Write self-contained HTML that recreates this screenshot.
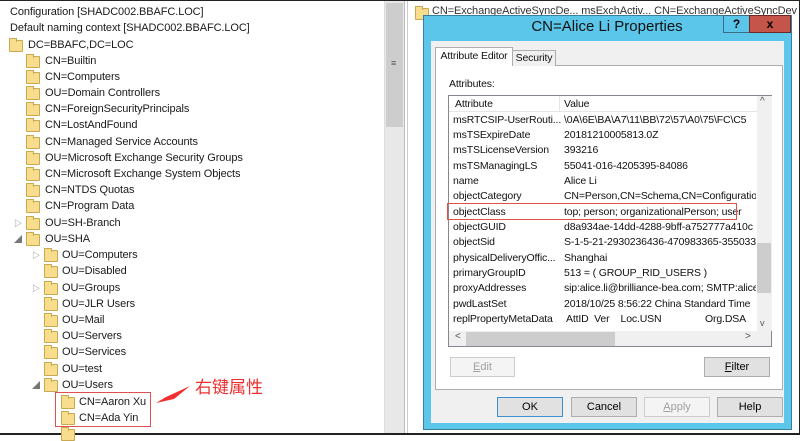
<!DOCTYPE html>
<html><head><meta charset="utf-8"><style>
*{margin:0;padding:0;box-sizing:border-box}
body{width:800px;height:435px;overflow:hidden;background:#fff;position:relative;font-family:"Liberation Sans","Noto Sans CJK SC",sans-serif;color:#000}
.a{position:absolute;white-space:nowrap}
.t{font-size:11px;line-height:16px;color:#1a1a1a;letter-spacing:-0.1px}
.f{position:absolute;width:14px;height:12px;background:#f8dd8f;border:1px solid #c9a94d;border-radius:1px}
.f:before{content:"";position:absolute;left:-1px;top:-3px;width:6px;height:3px;background:#f8dd8f;border:1px solid #c9a94d;border-bottom:none}
.ex{position:absolute;font-size:8px;color:#777}
.d{font-size:10.5px;line-height:16px;color:#111;letter-spacing:-0.15px}
.btn{position:absolute;height:20px;background:#e1e1e1;border:1px solid #adadad;font-size:11px;text-align:center;line-height:18px}
</style></head><body>
<div class="a" style="left:0;top:0;width:800px;height:1px;background:#222"></div>
<div class="a" style="left:0;top:433px;width:800px;height:2px;background:#222"></div>
<div class="a" style="left:799px;top:0;width:1px;height:435px;background:#222"></div>
<div class="a" style="left:384px;top:1px;width:20px;height:432px;background:#e8e8e8;border-left:1px solid #ddd"></div>
<div class="a" style="left:386px;top:3px;width:17px;height:124px;background:#cdcdcd"></div>
<div class="a" style="left:391px;top:58px;font-size:9px;color:#555">≡</div>
<div class="a" style="left:404px;top:1px;width:4px;height:432px;background:#fff;border-left:1px solid #bbb;border-right:1px solid #ccc"></div>
<div class="a t" style="left:10px;top:4px">Configuration [SHADC002.BBAFC.LOC]</div>
<div class="a t" style="left:10px;top:20px">Default naming context [SHADC002.BBAFC.LOC]</div>
<div class="f" style="left:9px;top:40px"></div><div class="a t" style="left:28px;top:37px">DC=BBAFC,DC=LOC</div>
<div class="f" style="left:26px;top:56px"></div><div class="a t" style="left:45px;top:53px">CN=Builtin</div>
<div class="f" style="left:26px;top:72px"></div><div class="a t" style="left:45px;top:69px">CN=Computers</div>
<div class="f" style="left:26px;top:88px"></div><div class="a t" style="left:45px;top:85px">OU=Domain Controllers</div>
<div class="f" style="left:26px;top:104px"></div><div class="a t" style="left:45px;top:101px">CN=ForeignSecurityPrincipals</div>
<div class="f" style="left:26px;top:120px"></div><div class="a t" style="left:45px;top:117px">CN=LostAndFound</div>
<div class="f" style="left:26px;top:137px"></div><div class="a t" style="left:45px;top:134px">CN=Managed Service Accounts</div>
<div class="f" style="left:26px;top:153px"></div><div class="a t" style="left:45px;top:150px">OU=Microsoft Exchange Security Groups</div>
<div class="f" style="left:26px;top:169px"></div><div class="a t" style="left:45px;top:166px">CN=Microsoft Exchange System Objects</div>
<div class="f" style="left:26px;top:185px"></div><div class="a t" style="left:45px;top:182px">CN=NTDS Quotas</div>
<div class="f" style="left:26px;top:201px"></div><div class="a t" style="left:45px;top:198px">CN=Program Data</div>
<div class="ex" style="left:14px;top:218px">▷</div><div class="f" style="left:26px;top:218px"></div><div class="a t" style="left:45px;top:215px">OU=SH-Branch</div>
<div class="ex" style="left:14px;top:234px">◢</div><div class="f" style="left:26px;top:234px"></div><div class="a t" style="left:45px;top:231px">OU=SHA</div>
<div class="ex" style="left:32px;top:250px">▷</div><div class="f" style="left:44px;top:250px"></div><div class="a t" style="left:62px;top:247px">OU=Computers</div>
<div class="f" style="left:44px;top:266px"></div><div class="a t" style="left:62px;top:263px">OU=Disabled</div>
<div class="ex" style="left:32px;top:283px">▷</div><div class="f" style="left:44px;top:283px"></div><div class="a t" style="left:62px;top:280px">OU=Groups</div>
<div class="f" style="left:44px;top:299px"></div><div class="a t" style="left:62px;top:296px">OU=JLR Users</div>
<div class="f" style="left:44px;top:315px"></div><div class="a t" style="left:62px;top:312px">OU=Mail</div>
<div class="f" style="left:44px;top:331px"></div><div class="a t" style="left:62px;top:328px">OU=Servers</div>
<div class="f" style="left:44px;top:347px"></div><div class="a t" style="left:62px;top:344px">OU=Services</div>
<div class="f" style="left:44px;top:364px"></div><div class="a t" style="left:62px;top:361px">OU=test</div>
<div class="ex" style="left:32px;top:380px">◢</div><div class="f" style="left:44px;top:380px"></div><div class="a t" style="left:62px;top:377px">OU=Users</div>
<div class="f" style="left:61px;top:397px"></div><div class="a t" style="left:79px;top:394px">CN=Aaron Xu</div>
<div class="f" style="left:61px;top:413px"></div><div class="a t" style="left:79px;top:410px">CN=Ada Yin</div>
<div class="f" style="left:61px;top:429px"></div>
<div class="a" style="left:55px;top:392px;width:96px;height:35px;border:1.5px solid #e05050"></div>
<div class="a" style="left:195px;top:373px;font-size:17px;color:#f03030;font-family:'Noto Sans CJK SC',sans-serif">右键属性</div>
<svg class="a" style="left:150px;top:380px" width="50" height="30"><path d="M40 6 L16 17 L6 23 L24 19 Z" fill="#f03030"/></svg>
<div class="f" style="left:415px;top:8px"></div>
<div class="a t" style="left:432px;top:3px;color:#333">CN=ExchangeActiveSyncDe... msExchActiv... CN=ExchangeActiveSyncDev</div>
<div class="a" style="left:423px;top:15px;width:369px;height:415px;background:#5bc6ea;border:1px solid #3a7fa0"></div>
<div class="a" style="left:423px;top:18px;width:300px;text-align:center;font-size:15px;color:#111;padding-left:68px">CN=Alice Li Properties</div>
<div class="a" style="left:723px;top:15px;width:27px;height:18px;background:#5bc6ea;border:1px solid #3a6d85;font-weight:bold;font-size:12px;text-align:center;line-height:16px">?</div>
<div class="a" style="left:749px;top:15px;width:42px;height:18px;background:#c5554b;border:1px solid #6b2a25;font-weight:bold;font-size:12px;text-align:center;line-height:16px">x</div>
<div class="a" style="left:431px;top:41px;width:353px;height:382px;background:#f0f0f0"></div>
<div class="a" style="left:435px;top:65px;width:348px;height:325px;background:#fff;border:1px solid #adadad"></div>
<div class="a d" style="left:512px;top:50px;width:44px;height:16px;background:#f0f0f0;border:1px solid #adadad;border-bottom:none;text-align:center;line-height:15px">Security</div>
<div class="a d" style="left:435px;top:47px;width:78px;height:19px;background:#fff;border:1px solid #adadad;border-bottom:none;text-align:center;line-height:17px">Attribute Editor</div>
<div class="a d" style="left:449px;top:76px">Attributes:</div>
<div class="a" style="left:448px;top:95px;width:324px;height:252px;border:1px solid #828790;background:#fff"></div>
<div class="a" style="left:449px;top:96px;width:308px;height:16px;border-bottom:1px solid #e5e5e5"></div>
<div class="a" style="left:559px;top:96px;width:1px;height:16px;background:#e5e5e5"></div>
<div class="a d" style="left:455px;top:96px">Attribute</div><div class="a d" style="left:564px;top:96px">Value</div>
<div class="a" style="left:757px;top:96px;width:15px;height:235px;background:#f0f0f0"></div>
<div class="a" style="left:757px;top:243px;width:14px;height:50px;background:#cdcdcd"></div>
<div class="a" style="left:760px;top:96px;font-size:10px;color:#555">^</div>
<div class="a" style="left:760px;top:318px;font-size:9px;color:#555">v</div>
<div class="a" style="left:449px;top:331px;width:322px;height:15px;background:#f0f0f0"></div>
<div class="a" style="left:466px;top:332px;width:149px;height:14px;background:#cdcdcd"></div>
<div class="a" style="left:455px;top:331px;font-size:10px;color:#555">&lt;</div>
<div class="a" style="left:745px;top:331px;font-size:10px;color:#555">&gt;</div>
<div class="a" style="left:449px;top:112px;width:307px;height:219px;overflow:hidden">
<div class="d" style="position:relative">
<div class="a" style="left:4px;top:0">msRTCSIP-UserRouti...</div><div class="a" style="left:115px;top:0">\0A\6E\BA\A7\11\BB\72\57\A0\75\FC\C5</div>
<div class="a" style="left:4px;top:15px">msTSExpireDate</div><div class="a" style="left:115px;top:15px">20181210005813.0Z</div>
<div class="a" style="left:4px;top:30px">msTSLicenseVersion</div><div class="a" style="left:115px;top:30px">393216</div>
<div class="a" style="left:4px;top:46px">msTSManagingLS</div><div class="a" style="left:115px;top:46px">55041-016-4205395-84086</div>
<div class="a" style="left:4px;top:61px">name</div><div class="a" style="left:115px;top:61px">Alice Li</div>
<div class="a" style="left:4px;top:76px">objectCategory</div><div class="a" style="left:115px;top:76px">CN=Person,CN=Schema,CN=Configuration,D</div>
<div class="a" style="left:4px;top:92px">objectClass</div><div class="a" style="left:115px;top:92px">top; person; organizationalPerson; user</div>
<div class="a" style="left:4px;top:107px">objectGUID</div><div class="a" style="left:115px;top:107px">d8a934ae-14dd-4288-9bff-a752777a410c</div>
<div class="a" style="left:4px;top:122px">objectSid</div><div class="a" style="left:115px;top:122px">S-1-5-21-2930236436-470983365-35503368</div>
<div class="a" style="left:4px;top:138px">physicalDeliveryOffic...</div><div class="a" style="left:115px;top:138px">Shanghai</div>
<div class="a" style="left:4px;top:153px">primaryGroupID</div><div class="a" style="left:115px;top:153px">513 = ( GROUP_RID_USERS )</div>
<div class="a" style="left:4px;top:168px">proxyAddresses</div><div class="a" style="left:115px;top:168px">sip:alice.li@brilliance-bea.com; SMTP:alice.li</div>
<div class="a" style="left:4px;top:184px">pwdLastSet</div><div class="a" style="left:115px;top:184px">2018/10/25 8:56:22 China Standard Time</div>
<div class="a" style="left:4px;top:199px">replPropertyMetaData</div><div class="a" style="left:117px;top:199px">AttID&nbsp; Ver&nbsp;&nbsp;&nbsp; Loc.USN</div><div class="a" style="left:256px;top:199px">Org.DSA</div>
</div></div>
<div class="a" style="left:447px;top:203px;width:290px;height:17px;border:1.5px solid #e05050"></div>
<div class="btn" style="left:450px;top:357px;width:65px;color:#a0a0a0;background:#f4f4f4;border-color:#ccc"><u>E</u>dit</div>
<div class="btn" style="left:704px;top:357px;width:66px"><u>F</u>ilter</div>
<div class="btn" style="left:497px;top:397px;width:66px;border-color:#3c8fd0">OK</div>
<div class="btn" style="left:571px;top:397px;width:66px">Cancel</div>
<div class="btn" style="left:644px;top:397px;width:66px;color:#a0a0a0;background:#f4f4f4;border-color:#ccc"><u>A</u>pply</div>
<div class="btn" style="left:717px;top:397px;width:66px">Help</div>
</body></html>
